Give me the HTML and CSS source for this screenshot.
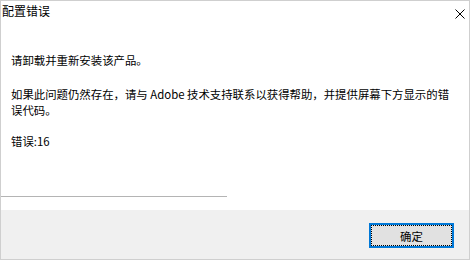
FILE: index.html
```html
<!DOCTYPE html>
<html lang="zh-CN">
  <head>
    <meta charset="UTF-8" />
    <meta name="viewport" content="width=device-width, initial-scale=1.0" />
    <title>配置错误</title>
    <link rel="stylesheet" href="styles.css">
  </head>
  <body>
    <div class="dialog">
      <header class="title-bar">
        <span class="title">配置错误</span>
        <span class="close">
          <svg width="10" height="10" viewBox="0 0 10 10">
            <path d="M0.5 0.5 L9.5 9.5 M9.5 0.5 L0.5 9.5" stroke="#000" stroke-width="1" fill="none" />
          </svg>
        </span>
      </header>
      <section class="message">
        <p class="first">请卸载并重新安装该产品。</p>
        <p class="help">如果此问题仍然存在，请与 Adobe 技术支持联系以获得帮助，并提供屏幕下方显示的错误代码。</p>
        <p class="code">错误:16</p>
      </section>
      <div class="divider"></div>
      <footer class="buttons">
        <button class="ok">确定</button>
      </footer>
    </div>
  </body>
</html>
```

FILE: styles.css
```css
body {
  margin: 0;
  padding: 0;
  background: #fff;
  font-family: "Noto Sans CJK SC", "Noto Sans", sans-serif;
  color: #000;
}
.dialog {
  width: 470px;
  height: 260px;
  box-sizing: border-box;
  border: 1px solid #cfcfcf;
  display: flex;
  flex-direction: column;
  background: #fff;
}
.title-bar {
  height: 19px;
  display: flex;
  align-items: center;
  justify-content: space-between;
  padding-left: 1px;
  padding-right: 1px;
}
.title {
  font-size: 12px;
  line-height: 19px;
}
.close {
  display: flex;
  padding: 3px;
  margin-top: 6px;
}
.message {
  padding: 32px 0 0 10px;
  font-size: 11.4px;
  line-height: 16px;
}
.message p {
  margin: 0;
}
.help {
  width: 440px;
  margin-top: 18px !important;
}
.code {
  margin-top: 15px !important;
}
.divider {
  margin-top: auto;
  width: 226px;
  height: 1px;
  background: #b4b4b4;
  margin-bottom: 13px;
}
.buttons {
  height: 49px;
  background: #f0f0f0;
  display: flex;
  justify-content: flex-end;
  padding: 13px 15px 0 0;
  box-sizing: border-box;
}
.ok {
  width: 85px;
  height: 25px;
  box-sizing: border-box;
  border: 2px solid #0078d7;
  background: #e1e1e1;
  outline: 1px dotted #000;
  outline-offset: -3px;
  font-family: "Noto Sans CJK SC", sans-serif;
  font-size: 11.4px;
  padding: 0;
  cursor: pointer;
}
```
